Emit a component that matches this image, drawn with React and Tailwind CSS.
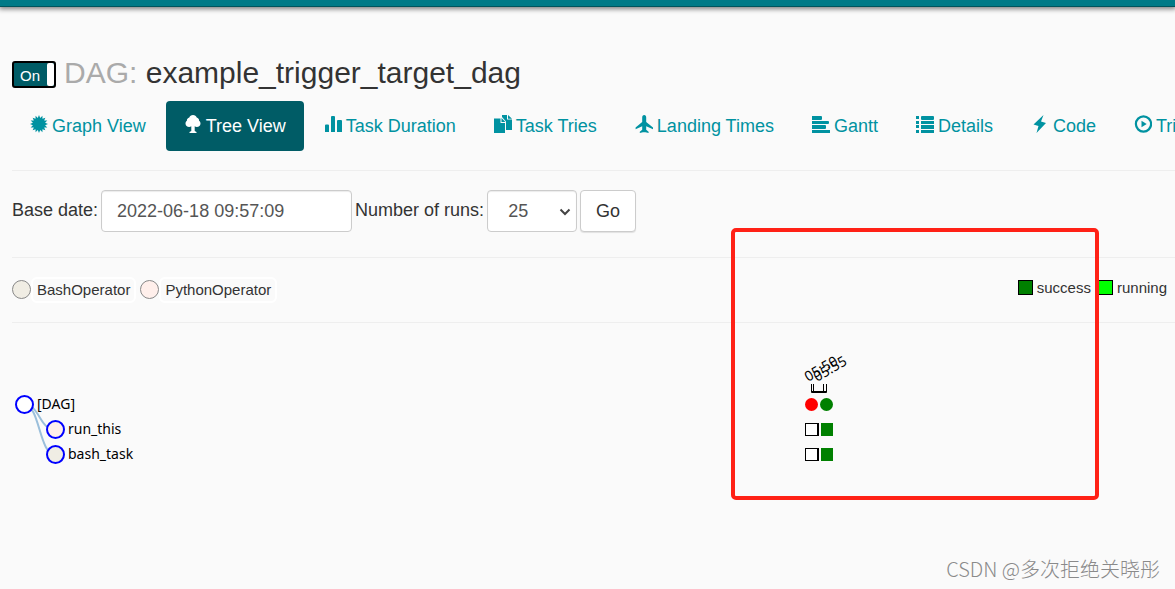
const svgBox = "h-[18px] w-[18px] shrink-0 fill-current";

function CertificateIcon() {
  const points = Array.from({ length: 32 }, (_, i) => {
    const r = i % 2 ? 6.2 : 9;
    const a = (i * Math.PI) / 16;
    return `${(9 + r * Math.sin(a)).toFixed(2)},${(9 - r * Math.cos(a)).toFixed(2)}`;
  }).join(" ");
  return (
    <svg viewBox="0 0 18 18" className={svgBox} aria-hidden="true">
      <polygon points={points} />
    </svg>
  );
}

function Icon({ d, children }) {
  return (
    <svg viewBox="0 0 18 18" className={svgBox} aria-hidden="true">
      {d && <path d={d} />}
      {children}
    </svg>
  );
}

const TREE =
  "M9 0c1.900 0 3.200 1.200 3.700 2.600 1.500.5 2.500 1.700 2.400 3.100.9.700 1.400 1.600 1.400 2.700 0 2.100-1.600 3.500-3.700 3.500-.8 0-1.500-.2-2.100-.6V16l1.800 1v1H5.500v-1L7.300 16v-4.700c-.6.4-1.300.6-2.100.6-2.100 0-3.700-1.400-3.700-3.500 0-1.100.5-2 1.400-2.700-.1-1.400.9-2.600 2.400-3.100C5.800 1.200 7.100 0 9 0z";
const STATS =
  "M1 10.500q0-1 1-1h2q1 0 1 1V17H1zM7 2q0-1 1-1h2q1 0 1 1v15H7zM13 6q0-1 1-1h3q1 0 1 1v11h-5z";
const DUPLICATE =
  "M0 3.500h6.500v4.500H11V18H0zM7.500 3l3.900 4H7.500zM8 0h5v4.500h5V15h-6V6.500L8 2zM14 0l4 3.700h-4z";
const PLANE =
  "M9.200 0c1.300 0 2 1.100 2 2.500v4.600l6.800 5.400v1.700l-6.800-3v3.600l2.400 1.900V18l-3.200-.8H8L4.800 18v-1.300l2.400-1.900v-3.600l-6.600 3v-1.700l6.600-5.400V2.500C7.200 1.100 7.900 0 9.200 0z";
const ALIGN =
  "M0 1h9q1 0 1 1v2q0 1-1 1H0zM0 6h16q1 0 1 1v1q0 1-1 1H0zM0 10h13q1 0 1 1v2q0 1-1 1H0zM0 15h18v3H0z";
const LIST =
  "M0 1h3v3H0zM5 2q0-1 1-1h11q1 0 1 1v2q0 1-1 1H6q-1 0-1-1zM0 6h3v3H0zM5 6h13v3H5zM0 10h3v3H0zM5 10h13v4H5zM0 15h3v3H0zM5 15h13v3H5z";
const FLASH = "M12.500 0 2.500 9.500l5 1.500-2 7L15 8l-5-1.500z";

const tabs = [
  { label: "Graph View", icon: <CertificateIcon /> },
  { label: "Tree View", icon: <Icon d={TREE} />, active: true },
  { label: "Task Duration", icon: <Icon d={STATS} /> },
  { label: "Task Tries", icon: <Icon d={DUPLICATE} /> },
  { label: "Landing Times", icon: <Icon d={PLANE} /> },
  { label: "Gantt", icon: <Icon d={ALIGN} /> },
  { label: "Details", icon: <Icon d={LIST} /> },
  { label: "Code", icon: <Icon d={FLASH} /> },
  {
    label: "Trigger DAG",
    icon: (
      <Icon>
        <circle cx="9.500" cy="9" r="7.600" fill="none" stroke="currentColor" strokeWidth="2.200" />
        <path d="M7.500 5.800 12.700 9l-5.200 3.200z" />
      </Icon>
    ),
  },
];

const operators = [
  { name: "BashOperator", dot: "bg-[#f0ede4]" },
  { name: "PythonOperator", dot: "bg-[#ffefeb]" },
];

const states = [
  { name: "success", box: "bg-[#008000]" },
  { name: "running", box: "bg-[#00ff00]" },
];

const nodes = [
  { name: "[DAG]", x: 24, y: 64, fill: "#ffffff" },
  { name: "run_this", x: 55, y: 89, fill: "#ffefeb" },
  { name: "bash_task", x: 55, y: 114, fill: "#f0ede4" },
];

function TreeChart() {
  return (
    <svg className="block h-[200px] w-full overflow-visible" role="img" aria-label="DAG runs">
      <g transform="translate(-12 0)">
        <g fill="none" stroke="#9bbfdb" strokeWidth="2">
          <path d="M24 64.500C40 64.500 39 89.500 55 89.500" />
          <path d="M24 64.500C40 64.500 39 114.500 55 114.500" />
        </g>
        {nodes.map((n) => (
          <g key={n.name}>
            <circle cx={n.x + 0.5} cy={n.y + 0.5} r="8.500" fill={n.fill} stroke="#0000ff" strokeWidth="2" />
            <text x={n.x + 13} y={n.y + 5} className="font-['Noto_Sans',sans-serif] text-[14px]">
              {n.name}
            </text>
          </g>
        ))}
        <g className="font-['Noto_Sans',sans-serif] text-[14px]">
          <text transform="translate(808 42) rotate(-30)">05:50</text>
          <text transform="translate(817 42) rotate(-30)">05:55</text>
        </g>
        <path d="M811.500 44v8.500h15V44M813.500 44v8M823.500 44v8M811 51.500h16" fill="none" stroke="#000" />
        <circle cx="811.500" cy="64.500" r="6.500" fill="#ff0000" />
        <circle cx="826.500" cy="64.500" r="6.500" fill="#008000" />
        {[83, 108].map((y) => (
          <g key={y}>
            <rect x="805.500" y={y + 0.5} width="12.500" height="12" fill="#fff" stroke="#000" />
            <path d={`M818 ${y}v13`} stroke="#000" strokeWidth="2" />
            <rect x="821" y={y} width="12" height="13" fill="#008000" />
          </g>
        ))}
      </g>
    </svg>
  );
}

export default function App() {
  return (
    <div className="relative min-h-screen overflow-hidden bg-[#fafafa] font-['Liberation_Sans',Arial,sans-serif] text-[18px] leading-[26px] text-[#333]">
      <header className="h-[7px] border-b border-[#00545c] bg-[#007a87] shadow-[0_1px_5px_1px_rgba(0,0,0,0.500)]" />
      <main className="px-3">
        <div className="flex items-center gap-2 pt-12">
          <button
            type="button"
            aria-pressed="true"
            className="mt-[2px] flex h-[27px] w-11 items-stretch justify-between rounded-[3px] border-2 border-black bg-[#005c66] text-[15px] text-white"
          >
            <span className="pl-[6px]">On</span>
            <span className="w-[7px] rounded-[2px] bg-white" />
          </button>
          <h1 className="text-[30px] leading-[36px]">
            <span className="text-[#aaa]">DAG:</span> example_trigger_target_dag
          </h1>
        </div>
        <nav className="mt-[10px] -mr-3 flex gap-[2px] overflow-hidden whitespace-nowrap">
          {tabs.map((t) => (
            <a
              key={t.label}
              href="#"
              className={
                t.active
                  ? "flex shrink-0 gap-1 rounded bg-[#005c66] px-[18px] py-3 text-white"
                  : "flex shrink-0 gap-1 rounded px-[18px] py-3 text-[#0092a1]"
              }
            >
              <span className="pt-[2px]">{t.icon}</span>
              {t.label}
            </a>
          ))}
        </nav>
        <hr className="mt-[19px] -mr-3 border-[#eee]" />
        <form className="mt-[19px] flex items-center gap-[3px]" onSubmit={(e) => e.preventDefault()}>
          <label htmlFor="base-date" className="pb-[2px]">Base date:</label>
          <input
            id="base-date"
            type="text"
            defaultValue="2022-06-18 09:57:09"
            className="h-[42px] w-[251px] rounded border border-[#ccc] bg-white px-[15px] text-[#555] shadow-[inset_0_1px_1px_rgba(0,0,0,0.080)]"
          />
          <label htmlFor="runs" className="pb-[2px]">Number of runs:</label>
          <div className="relative">
            <select
              id="runs"
              defaultValue="25"
              className="h-[42px] w-[90px] appearance-none rounded border border-[#ccc] bg-white px-5 text-[#555] shadow-[inset_0_1px_1px_rgba(0,0,0,0.080)]"
            >
              <option>5</option>
              <option>25</option>
              <option>50</option>
            </select>
            <svg viewBox="0 0 12 8" className="pointer-events-none absolute top-[18px] right-[6px] h-2 w-3" aria-hidden="true">
              <path d="M1.500 1.500 6 6l4.500-4.500" fill="none" stroke="#444" strokeWidth="2" />
            </svg>
          </div>
          <button type="submit" className="h-[42px] w-14 rounded border border-[#ccc] bg-white shadow-[0_1px_1px_rgba(0,0,0,0.100)]">
            Go
          </button>
        </form>
        <hr className="mt-[25px] -mr-3 border-[#eee]" />
        <div className="-mr-1 flex justify-between pt-[19px] text-[15px] leading-[22px]">
          <ul className="flex gap-1">
            {operators.map((o) => (
              <li key={o.name} className="flex items-center">
                <span className={`${o.dot} mb-[2px] h-[19px] w-[19px] rounded-full border border-[#888]`} />
                <span className="rounded-md border-2 border-white px-1">{o.name}</span>
              </li>
            ))}
          </ul>
          <ul className="flex gap-[7px]">
            {states.map((s) => (
              <li key={s.name} className="flex h-[22px] items-center gap-1">
                <span className={`${s.box} mb-[2px] h-[15px] w-[15px] border border-black`} />
                {s.name}
              </li>
            ))}
          </ul>
        </div>
        <hr className="mt-[19px] -mr-3 border-[#eee]" />
        <div className="mt-[17px]">
          <TreeChart />
        </div>
      </main>
      <div className="pointer-events-none absolute top-[228px] left-[731px] h-[272px] w-[368px] rounded-[5px] border-4 border-[#ff2116]" />
      <p className="absolute right-[15px] bottom-[7px] font-['Noto_Sans_CJK_SC',sans-serif] text-[20px] font-light text-[#8a8a8a]">
        CSDN @多次拒绝关晓彤
      </p>
    </div>
  );
}
